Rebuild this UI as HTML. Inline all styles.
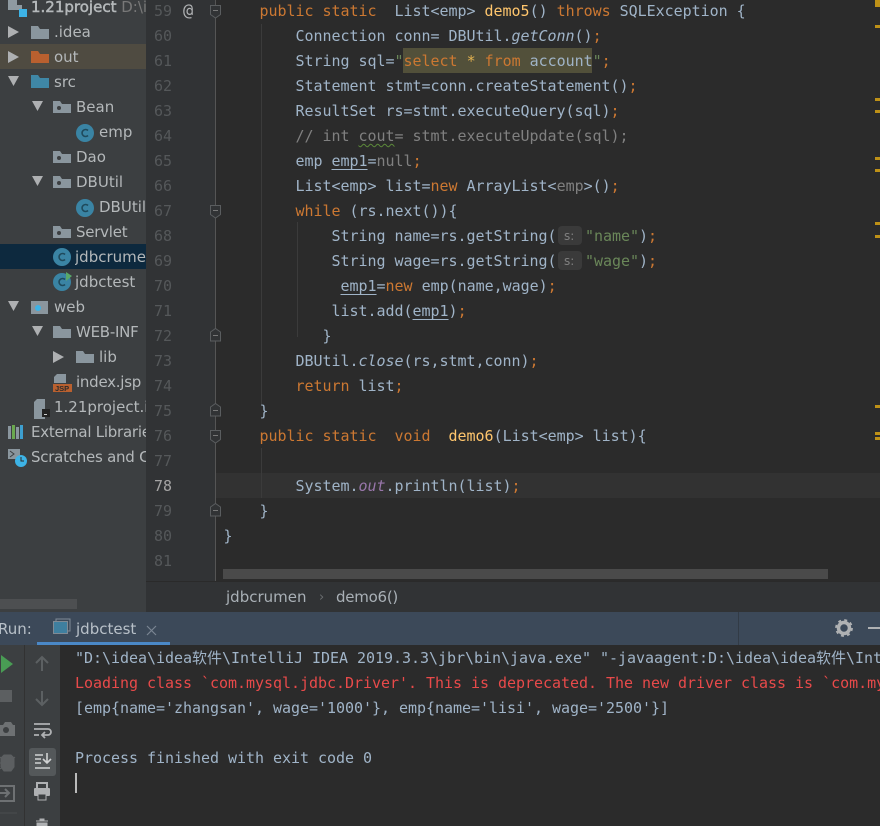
<!DOCTYPE html>
<html><head><meta charset="utf-8"><style>
html,body{margin:0;padding:0;background:#2b2b2b}
#r{position:relative;width:880px;height:826px;overflow:hidden;background:#2b2b2b}
#r div,#r svg{position:absolute}
.c{font:15px/25px "DejaVu Sans Mono","Noto Sans CJK SC",monospace;letter-spacing:-.03px;color:#a0b4c8;white-space:pre;left:223.5px}
.n{font:15px/25px "DejaVu Sans Mono",monospace;color:#55585a;left:154px;width:20px}
.s{font:15px/25px "DejaVu Sans",sans-serif;color:#b4b8ba;white-space:pre}
.t{letter-spacing:-.25px}
.k{color:#cc7832}.g{color:#6a8759}.m{color:#808080}.u{text-decoration:underline;text-underline-offset:3px}.i{font-style:italic}.v{color:#9876aa;font-style:italic}
.o{color:#cc7832}
</style></head><body><div id="r">
<div style="left:0;top:0;width:146px;height:612px;background:#3c3f41"></div>
<div style="left:146px;top:0;width:70px;height:581px;background:#313335"></div>
<div style="left:0;top:44px;width:146px;height:25px;background:#4f4b41"></div>
<div style="left:0;top:244px;width:146px;height:25px;background:#0d293e"></div>
<div style="left:216px;top:473px;width:664px;height:25px;background:#323232"></div>
<div style="left:215px;top:0;width:1px;height:581px;background:#555"></div>
<div style="left:403px;top:48px;width:189px;height:25px;background:#52503a"></div>
<div style="left:0;top:599px;width:77px;height:10px;background:#4d4f51"></div>
<div style="left:146px;top:581px;width:734px;height:31px;background:#313335;border-top:1px solid #2a2a2a;box-sizing:border-box"></div>
<div style="left:223px;top:569px;width:605px;height:10px;background:#4a4a4a"></div>
<div style="left:0;top:612px;width:880px;height:33px;background:#3c4959"></div>
<div style="left:37px;top:642px;width:133px;height:3px;background:#4a88c7"></div>
<div style="left:738px;top:612px;width:1px;height:33px;background:#323b46"></div>
<div style="left:0;top:645px;width:24px;height:181px;background:#3c3f41"></div>
<div style="left:24px;top:645px;width:36px;height:181px;background:#3c3f41;border-left:1px solid #323232;box-sizing:border-box"></div>
<div style="left:29px;top:748px;width:27px;height:28px;background:#54585a;border-radius:3px"></div>

<!-- tree text -->
<div class="s" style="left:31px;top:-5px;-webkit-text-stroke:.5px #b4b8ba">1.21project <span style="-webkit-text-stroke:0;color:#787878">D:\i</span></div>
<div class="s" style="left:54px;top:20px">.idea</div>
<div class="s" style="left:54px;top:45px">out</div>
<div class="s" style="left:54px;top:70px">src</div>
<div class="s" style="left:76px;top:95px">Bean</div>
<div class="s" style="left:99px;top:120px">emp</div>
<div class="s" style="left:76px;top:145px">Dao</div>
<div class="s" style="left:76px;top:170px">DBUtil</div>
<div class="s" style="left:99px;top:195px">DBUtil</div>
<div class="s t" style="left:76px;top:220px">Servlet</div>
<div class="s" style="left:75px;top:245px;width:71px;overflow:hidden">jdbcrumen</div>
<div class="s" style="left:75px;top:270px">jdbctest</div>
<div class="s" style="left:54px;top:295px">web</div>
<div class="s t" style="left:76px;top:320px">WEB-INF</div>
<div class="s" style="left:99px;top:345px">lib</div>
<div class="s t" style="left:76px;top:370px">index.jsp</div>
<div class="s" style="left:54px;top:395px;width:92px;overflow:hidden">1.21project.iml</div>
<div class="s t" style="left:31px;top:420px;width:115px;overflow:hidden">External Libraries</div>
<div class="s t" style="left:31px;top:445px;width:115px;overflow:hidden">Scratches and Consoles</div>

<!-- tree icons -->
<svg style="left:0;top:0" width="146" height="480" viewBox="0 0 146 480">
<path d="M8 0h9v5h5v5H8z" fill="#8f9aa1"/><rect x="19" y="9" width="8" height="8" fill="#3db3e6"/>
<path d="M8 26l11 6-11 6zM8 51l11 6-11 6zM53 351l11 6-11 6z" fill="#aeb0b2"/>
<path d="M8 76h11l-5.500 10zM32 101h11l-5.500 10zM32 176h11l-5.500 10zM8 301h11l-5.500 10zM32 326h11l-5.500 10z" fill="#aeb0b2"/>
<path d="M31 26h7l2 3h9v10H31z" fill="#8a969e"/>
<path d="M31 51h7l2 3h9v9H31z" fill="#b9602f"/>
<path d="M31 75h7l2 3h9v10H31z" fill="#3f87a6"/>
<g fill="#8a969e">
<path d="M53 101h7l2 3h9v9H53zM53 151h7l2 3h9v9H53zM53 176h7l2 3h9v9H53zM53 226h7l2 3h9v9H53zM53 326h7l2 3h9v9H53zM76 351h7l2 3h9v9H76zM31 301h17v13H31z"/>
</g>
<g fill="#3c3f41"><circle cx="59" cy="108" r="2"/><circle cx="59" cy="158" r="2"/><circle cx="59" cy="183" r="2"/><circle cx="59" cy="233" r="2"/></g>
<circle cx="38" cy="308" r="3" fill="#3db3e6"/>
<g fill="#3a84a4"><circle cx="85" cy="133" r="9"/><circle cx="85" cy="208" r="9"/><circle cx="62" cy="257" r="9"/><circle cx="62" cy="282" r="9"/></g>
<g fill="none" stroke="#1f4a5c" stroke-width="1.600"><path d="M88 130.500a3.500 3.500 0 1 0 0 5M88 205.500a3.500 3.500 0 1 0 0 5M65 254.500a3.500 3.500 0 1 0 0 5M65 279.500a3.500 3.500 0 1 0 0 5"/></g>
<path d="M66 272l6 4-6 5z" fill="#59a869"/>
<path d="M57 374h9v9H54v-6z" fill="#8a969e"/><rect x="53" y="384" width="19" height="8" fill="#b9602f"/>
<text x="55" y="391" font-family="Liberation Sans" font-size="7.500" font-weight="bold" fill="#2b2b2b">JSP</text>
<path d="M37 399h8v20H34v-17z" fill="#8a969e"/><rect x="42" y="409" width="8" height="8" fill="#222"/><rect x="44" y="414" width="3" height="1" fill="#ccc"/>
<path d="M8 426h3v13H8z" fill="#8a969e"/><path d="M12 425h3v14h-3z" fill="#6aa84f"/><path d="M16 427h3v12h-3z" fill="#8a969e"/><path d="M20 425h3v14h-3z" fill="#3d9fd0"/>
<path d="M8 449h12v10H8z" fill="#8a969e"/><path d="M10 451l4 3-4 3" fill="none" stroke="#3c3f41"/>
<circle cx="21" cy="461" r="6" fill="#3db3e6"/><path d="M21 457v4h3" fill="none" stroke="#2b2b2b"/>
</svg>

<!-- line numbers -->
<div class="n" style="top:-1px">59</div><div class="n" style="top:24px">60</div><div class="n" style="top:49px">61</div><div class="n" style="top:74px">62</div><div class="n" style="top:99px">63</div><div class="n" style="top:124px">64</div><div class="n" style="top:149px">65</div><div class="n" style="top:174px">66</div><div class="n" style="top:199px">67</div><div class="n" style="top:224px">68</div><div class="n" style="top:249px">69</div><div class="n" style="top:274px">70</div><div class="n" style="top:299px">71</div><div class="n" style="top:324px">72</div><div class="n" style="top:349px">73</div><div class="n" style="top:374px">74</div><div class="n" style="top:399px">75</div><div class="n" style="top:424px">76</div><div class="n" style="top:449px">77</div><div class="n" style="top:474px;color:#a4a3a3">78</div><div class="n" style="top:499px">79</div><div class="n" style="top:524px">80</div><div class="n" style="top:549px">81</div>
<div class="n" style="left:183px;top:-1px;color:#afb1b3;font-size:17px">@</div>

<!-- code -->
<div class="c" style="top:-1px">    <span class="k">public static</span>  List&lt;emp&gt; <span style="color:#ffc66d">demo5</span>() <span class="k">throws</span> SQLException {</div>
<div class="c" style="top:24px">        Connection conn= DBUtil.<span class="i">getConn</span>()<span class="o">;</span></div>
<div class="c" style="top:49px">        String sql=<span class="g">"</span><span class="k">select</span> <span style="color:#e0b050">*</span> <span class="k">from</span> account<span class="g">"</span><span class="o">;</span></div>
<div class="c" style="top:74px">        Statement stmt=conn.createStatement()<span class="o">;</span></div>
<div class="c" style="top:99px">        ResultSet rs=stmt.executeQuery(sql)<span class="o">;</span></div>
<div class="c" style="top:124px;color:#808080">        // int <span style="text-decoration:underline wavy #5c8a3a;text-underline-offset:2px;text-decoration-thickness:1px">cout</span>= stmt.executeUpdate(sql);</div>
<div class="c" style="top:149px">        emp <span class="u">emp1</span>=<span class="m">null</span><span class="o">;</span></div>
<div class="c" style="top:174px">        List&lt;emp&gt; list=<span class="k">new</span> ArrayList&lt;<span class="m">emp</span>&gt;()<span class="o">;</span></div>
<div class="c" style="top:199px">        <span class="k">while</span> (rs.next()){</div>
<div class="c" style="top:224px">            String name=rs.getString(</div>
<div class="c" style="left:585px;top:224px;color:#6a8759">"name"<span style="color:#a0b4c8">)</span><span class="o">;</span></div>
<div class="c" style="top:249px">            String wage=rs.getString(</div>
<div class="c" style="left:585px;top:249px;color:#6a8759">"wage"<span style="color:#a0b4c8">)</span><span class="o">;</span></div>
<div class="c" style="top:274px">             <span class="u">emp1</span>=<span class="k">new</span> emp(name,wage)<span class="o">;</span></div>
<div class="c" style="top:299px">            list.add(<span class="u">emp1</span>)<span class="o">;</span></div>
<div class="c" style="top:324px">           }</div>
<div class="c" style="top:349px">        DBUtil.<span class="i">close</span>(rs,stmt,conn)<span class="o">;</span></div>
<div class="c" style="top:374px">        <span class="k">return</span> list<span class="o">;</span></div>
<div class="c" style="top:399px">    }</div>
<div class="c" style="top:424px">    <span class="k">public static  void</span>  <span style="color:#ffc66d">demo6</span>(List&lt;emp&gt; list){</div>
<div class="c" style="top:474px">        System.<span class="v">out</span>.println(list)<span class="o">;</span></div>
<div class="c" style="top:499px">    }</div>
<div class="c" style="top:524px">}</div>

<!-- param hints -->
<div style="left:558px;top:226px;width:24px;height:19px;background:#3a3a3a;border-radius:4px"></div>
<div style="left:558px;top:251px;width:24px;height:19px;background:#3a3a3a;border-radius:4px"></div>
<div class="s" style="left:564px;top:224px;font-size:12px;color:#808080">s:</div>
<div class="s" style="left:564px;top:249px;font-size:12px;color:#808080">s:</div>

<!-- fold marks, indent guides, error stripes -->
<svg style="left:0;top:0" width="880" height="612" viewBox="0 0 880 612">
<g fill="#313335" stroke="#5a5d5f">
<path d="M210.500 5.500h10v9l-5 3.500-5-3.500z"/><path d="M210.500 205.500h10v9l-5 3.500-5-3.500z"/><path d="M210.500 430.500h10v9l-5 3.500-5-3.500z"/>
<path d="M210.500 332l5-3.500 5 3.500v9h-10z"/><path d="M210.500 407l5-3.500 5 3.500v9h-10z"/><path d="M210.500 507l5-3.500 5 3.500v9h-10z"/>
</g>
<path d="M213 10.500h5M213 210.500h5M213 435.500h5M213 335.500h5M213 410.500h5M213 510.500h5" stroke="#777"/>
<path d="M261.500 24v380M261.500 448v50M297.500 222v115" stroke="#3b3b3b"/>
<g fill="#be9117"><rect x="875" y="0" width="5" height="7"/><rect x="875" y="25" width="5" height="3"/><rect x="875" y="98" width="5" height="3"/><rect x="875" y="110" width="5" height="3"/><rect x="875" y="157" width="5" height="3"/><rect x="875" y="169" width="5" height="3"/><rect x="875" y="222" width="5" height="3"/><rect x="875" y="235" width="5" height="3"/><rect x="875" y="405" width="5" height="3"/><rect x="875" y="432" width="5" height="3"/><rect x="875" y="437" width="5" height="3"/></g>
</svg>

<!-- breadcrumb -->
<div class="s" style="left:226px;top:585px;color:#a9b0b6">jdbcrumen</div>
<div class="s" style="left:319px;top:585px;color:#6b6e70;font-size:13px">›</div>
<div class="s t" style="left:336px;top:585px;color:#a9b0b6">demo6()</div>

<!-- run bar -->
<div class="s" style="left:-2px;top:617px;color:#b8c0c8">Run:</div>
<div class="s" style="left:76px;top:617px;color:#b8c0c8">jdbctest</div>
<svg style="left:0;top:612px" width="880" height="33" viewBox="0 0 880 33">
<path d="M56 10v-3h14v12h-2" fill="none" stroke="#7f8b96" stroke-width="1"/><rect x="53.500" y="9.500" width="14" height="12" fill="#3f7f9f" stroke="#808a94"/>
<path d="M147 14l9 9M156 14l-9 9" stroke="#7a8592" stroke-width="1.200"/>
<circle cx="844" cy="16" r="5.500" fill="none" stroke="#afb1b3" stroke-width="3.500"/><circle cx="844" cy="16" r="8" fill="none" stroke="#afb1b3" stroke-width="1.800" stroke-dasharray="3 3.280"/>
<rect x="868" y="15" width="12" height="2" fill="#afb1b3"/>
</svg>

<!-- console -->
<div class="c" style="left:75px;top:646px;color:#a0b4c8">"D:\idea\idea软件\IntelliJ IDEA 2019.3.3\jbr\bin\java.exe" "-javaagent:D:\idea\idea软件\IntelliJ</div>
<div class="c" style="left:75px;top:671px;color:#e84a4a">Loading class `com.mysql.jdbc.Driver'. This is deprecated. The new driver class is `com.mysql.cj</div>
<div class="c" style="left:75px;top:696px">[emp{name='zhangsan', wage='1000'}, emp{name='lisi', wage='2500'}]</div>
<div class="c" style="left:75px;top:746px">Process finished with exit code 0</div>
<div style="left:75px;top:773px;width:2px;height:20px;background:#bbb"></div>

<!-- run toolbar icons -->
<svg style="left:0;top:645px" width="60" height="181" viewBox="0 0 60 181">
<path d="M1 10l12 9-12 9z" fill="#499c54"/>
<rect x="0" y="45" width="12" height="12" fill="#5c5f61"/>
<path d="M0 80h3l2-3h6l2 3h2v11H0z" fill="#6e7173"/><circle cx="6" cy="85" r="3" fill="#3c3f41"/>
<path d="M4 110h7l3 3v9l-3 4H4l-3-4v-9zM0 112l3 3M0 118h3M0 124l3-2M15 112l-3 3" fill="#5c5f61" stroke="#5c5f61"/>
<path d="M0 141h14v15H0" fill="none" stroke="#6e7173" stroke-width="2"/><path d="M0 148h8M5 144l4 4-4 4" fill="none" stroke="#6e7173" stroke-width="2"/>
<path d="M0 168h17" stroke="#4a4d4f"/>
<path d="M42 26V12M36 18l6-6 6 6M42 46v14M36 54l6 6 6-6" fill="none" stroke="#5c6062" stroke-width="2"/>
<path d="M34 79h16M34 84h14a3 3 0 0 1 0 6h-6M45 87l-3 3 3 3M34 90h5" fill="none" stroke="#afb1b3" stroke-width="1.800"/>
<path d="M35 110h8M35 114h6M35 118h6M35 123h15M47 108v10M43 114l4 4 4-4" fill="none" stroke="#d0d2d3" stroke-width="1.600"/>
<path d="M37 143v-5h10v5" fill="none" stroke="#afb1b3" stroke-width="2"/><rect x="34" y="143" width="16" height="8" rx="1" fill="#afb1b3"/><rect x="38" y="149" width="8" height="6" fill="#3c3f41" stroke="#afb1b3"/>
<path d="M36 176h12M40 176v-2h4v2M37 178h10v3H37z" fill="#afb1b3" stroke="#afb1b3"/>
</svg>
</div></body></html>
